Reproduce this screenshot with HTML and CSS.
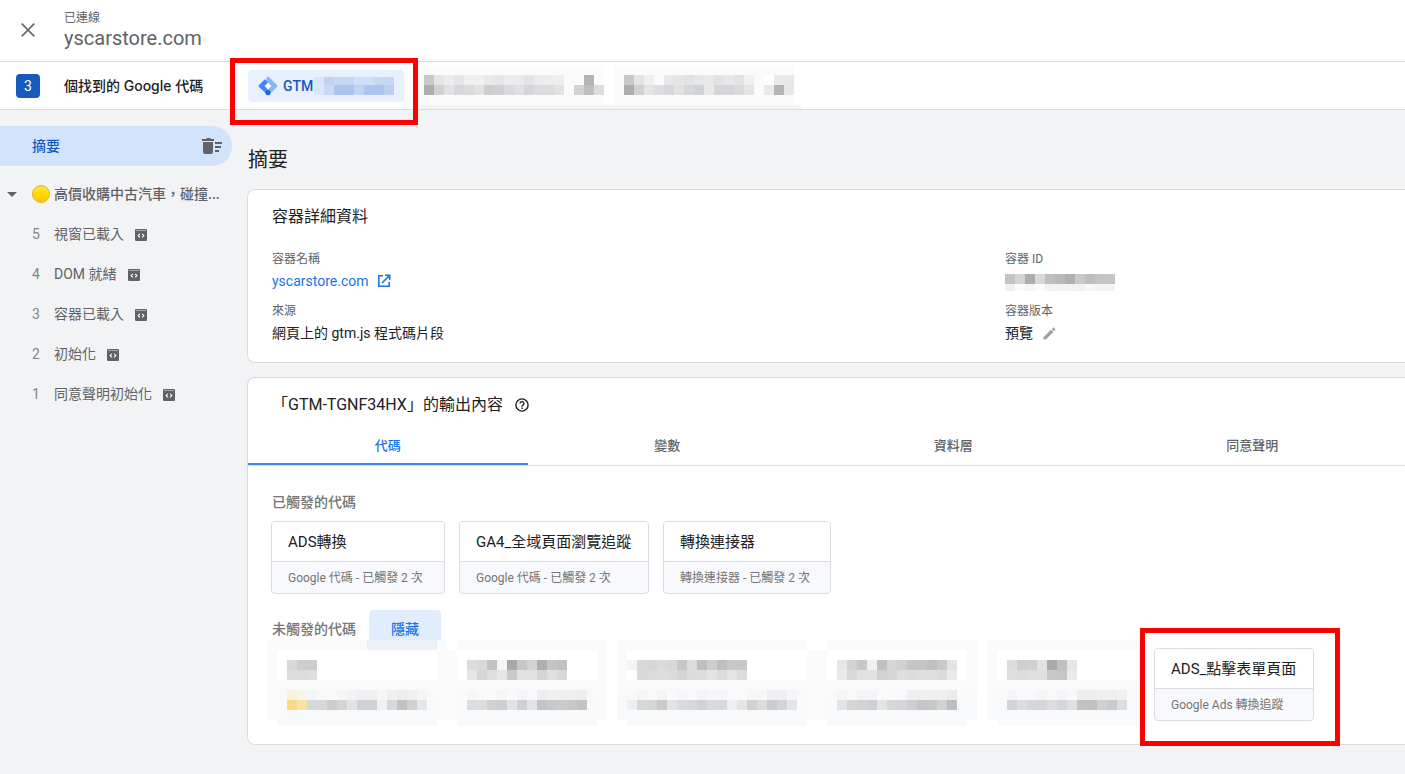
FILE: index.html
```html
<!DOCTYPE html>
<html lang="zh-Hant">
<head>
<meta charset="utf-8">
<title>yscarstore.com</title>
<meta name="viewport" content="width=device-width, initial-scale=1">
<link rel="stylesheet" href="styles.css">
</head>
<body>
<svg class="sprite" aria-hidden="true">
  <symbol id="code" viewBox="0 0 12 12"><rect width="12" height="12" rx="1" fill="#5f6368"/><path d="M1 1.500h10" stroke="#a5a8ac" stroke-width="1"/><path d="M4.900 4.800 3.100 6.600l1.800 1.800M7.100 4.800l1.800 1.800-1.800 1.800" fill="none" stroke="#fff" stroke-width="1.100"/></symbol>
</svg>
<header class="topbar">
  <button class="close" aria-label="關閉"><svg width="14" height="14" viewBox="0 0 14 14"><path d="M.7.7l12.6 12.6M13.3.7.7 13.3" stroke="#6b6f73" stroke-width="1.8"/></svg></button>
  <div>
    <div class="status">已連線</div>
    <div class="domain">yscarstore.com</div>
  </div>
</header>
<div class="tagbar">
  <span class="count">3</span>
  <span class="found">個找到的 Google 代碼</span>
  <div class="chip-wrap">
    <button class="chip">
      <svg width="20" height="20" viewBox="0 0 20 20"><path d="M9.100 1a1.300 1.300 0 0 1 1.800 0l8.100 8.100a1.300 1.300 0 0 1 0 1.800L12 18 6 10z" fill="#8ab4f8"/><path d="M6.800 3.300 10 6.600 9 13l3.200 2.200L9.700 19 1 10.900a1.300 1.300 0 0 1 0-1.800z" fill="#4285f4"/><path d="M10 6.600 13.400 10 10 13.400 6.600 10z" fill="#fff"/><circle cx="10" cy="16.700" r="2.500" fill="#1967d2"/></svg>
      <span>GTM</span>
      <svg class="mosaic" width="80" height="18" viewBox="0 2 80 18" data-x="0" data-y="0" data-rows="d9e5f9 bfd2f1 c6d7f3 c6d7f3 d0dff5 cfdff5 c8daf3 c5d7f2|dce7fb c9d9f5 aec5ee aec5ee c1d3f2 b0c5ed aec6ec bbcff0"></svg>
    </button>
    <span class="mark mark-chip"></span>
  </div>
  <svg class="mosaic others" width="387" height="44" data-x="10" data-y="10" data-rows="c8 e4 ec e4e6e9 f0 f0 e9 e6 eb eb e2e5e4 ebeceb ebeeed ee - - b5 - - - c8 e4 edf0ef fbfbfb e8 e6 e1e3e6 e6e8e8 e8 e3 e8 e4 eff2f1 - ff ea e8|ae d2 e0e2e5 d6d8db dadbde e2e4e3 ce cfd0d2 d9dadd dfe0e3 d5d6da dbdce0 dc e3 - d3 bf dd - - ae d2 e4e6e5 dcdee1 d7d8db e1e3e2 d5d7db d1d3d7 e8eae9 d5d6da d5d6da d8dadd e4 - e9 b4 e7"><rect width="190" height="40" fill="#fbfbfb"/><rect x="200" width="180" height="40" fill="#fbfbfb"/><rect y="40" width="387" height="4" fill="#f4f4f4"/></svg>
</div>
<div class="layout">
  <nav class="side">
    <a class="summary" href="#">摘要
      <svg width="20" height="16" viewBox="0 0 20 16" fill="#5f6368"><path d="M0 1h4l1-1h3l1 1h3v2H0zM1 4h10v10a2 2 0 0 1-2 2H3a2 2 0 0 1-2-2zM13 4h7v2h-7zM13 8h6v2h-6zM13 12h4v2h-4z"/></svg>
    </a>
    <button class="group">
      <svg class="caret" width="10" height="6" viewBox="0 0 10 6"><path d="M0 1h10L5 6z" fill="#5f6368"/></svg>
      <svg class="dot" width="18" height="18" viewBox="0 0 18 18"><defs><linearGradient id="sun" x2="0" y2="1"><stop stop-color="#ffe45a"/><stop offset=".4" stop-color="#ffdc08"/><stop offset="1" stop-color="#fbc900"/></linearGradient></defs><circle cx="9" cy="9" r="8.500" fill="url(#sun)" stroke="#e4b22c"/></svg>
      <span class="page">高價收購中古汽車，碰撞...</span>
    </button>
    <a class="event" href="#"><span class="n">5</span>視窗已載入<svg width="12" height="12"><use href="#code"/></svg></a>
    <a class="event" href="#"><span class="n">4</span>DOM 就緒<svg width="12" height="12"><use href="#code"/></svg></a>
    <a class="event" href="#"><span class="n">3</span>容器已載入<svg width="12" height="12"><use href="#code"/></svg></a>
    <a class="event" href="#"><span class="n">2</span>初始化<svg width="12" height="12"><use href="#code"/></svg></a>
    <a class="event" href="#"><span class="n">1</span>同意聲明初始化<svg width="12" height="12"><use href="#code"/></svg></a>
  </nav>
  <main class="main">
    <h1>摘要</h1>
    <section class="panel details">
      <h2>容器詳細資料</h2>
      <dl>
        <div><dt>容器名稱</dt><dd><a href="#">yscarstore.com<svg width="14" height="14" viewBox="0 0 14 14" fill="none" stroke="#1a73e8" stroke-width="1.600"><path d="M6 1.800H1.800v10.400h10.400V8M8 1.300h4.700V6M12.500 1.500 5 9"/></svg></a></dd></div>
        <div><dt>容器 ID</dt><dd><svg class="mosaic" width="112" height="20" data-x="0" data-y="0" data-rows="c3 d3 ad d9 c0 b9 b1 c9 be c4 c5|f0 fa f5 fb f2 f3 f3 f2 f8 f4 f4" viewBox="0 -3 112 20"></svg></dd></div>
        <div><dt>來源</dt><dd>網頁上的 gtm.js 程式碼片段</dd></div>
        <div><dt>容器版本</dt><dd>預覽<svg width="13" height="13" viewBox="0 0 13 13" fill="#a0a0a0"><path d="M.5 10.200 8 2.700l2.300 2.300-7.500 7.500H.5zM8.800 1.900l1-1c.4-.4.900-.4 1.300 0l1 1c.4.400.4.900 0 1.300l-1 1z"/></svg></dd></div>
      </dl>
    </section>
    <section class="panel output">
      <h2>「GTM-TGNF34HX」的輸出內容
        <svg width="14" height="14" viewBox="0 0 14 14" fill="none" stroke="#202124"><circle cx="7" cy="7" r="6.100" stroke-width="1.400"/><path d="M5.100 5.500a1.900 1.900 0 1 1 2.900 1.600C7.300 7.600 7 7.900 7 8.700" stroke-width="1.300"/><path d="M7 9.600v1.400" stroke-width="1.400"/></svg>
      </h2>
      <div class="tabs" role="tablist">
        <button role="tab" aria-selected="true">代碼</button>
        <button role="tab">變數</button>
        <button role="tab">資料層</button>
        <button role="tab">同意聲明</button>
      </div>
      <h3>已觸發的代碼</h3>
      <div class="cards">
        <article class="card ads"><h4>ADS轉換</h4><p>Google 代碼 - 已觸發 2 次</p></article>
        <article class="card ga"><h4>GA4_全域頁面瀏覽追蹤</h4><p>Google 代碼 - 已觸發 2 次</p></article>
        <article class="card linker"><h4>轉換連接器</h4><p>轉換連接器 - 已觸發 2 次</p></article>
      </div>
      <div class="unfired"><h3>未觸發的代碼</h3><button class="hide">隱藏</button></div>
      <div class="hidden-cards">
        <svg class="mosaic" width="180" height="86" data-x="20" data-y="20" data-rows="d8 cd cd|dc dc de||faf2df f8f4e8 f4f5f6 f7f9fb f7f9fb f5f6f8 f1f2f4 eef0f2 eef0f2 f5f6f8 eef0f2 ebedef eef0f2 f4f5f6|fbda85 fae2a2 d6d8dc d6d8da cd d4 e2e3e6 d0d1d2 d0d1d2 eff0f2 d7d8da c1c2c4 d0 e6e7e8"><path fill="#fafafa" d="M0 0h180v80h-10v6H10v-6H0z"/><path fill="#eaf0fa" d="M100 0h70v10h-70z"/><path fill="#f8fbff" d="M170 0h10v10h-10z"/><path fill="#fff" d="M10 10h160v30H10z"/><path fill="#f7f9fb" d="M10 50h160v30H10z"/><path fill="#f8faf9" d="M10 80h160v6H10z"/></svg>
        <svg class="mosaic" width="160" height="86" data-x="20" data-y="20" data-rows="dc d9 c2 f6 a8 c8 d3 af c4 c1|e6 d7 df e6 c9 e2 e1 d5 df d8||f5f6f8 f7f9fb f7f9fb f5f6f8 f8fafc f5f6f8 f7f9fb ebecee edeff0 edeff0 eceef0 ecedef|dcdddf dcdddf d1 cecfd1 e2e3e6 cfd0d2 e3e4e7 c2c3c5 c7c8ca ca c8 c3"><path fill="#fafafa" d="M10 0h150v80h-10v6H10v-6H0V10h10z"/><path fill="#fff" d="M10 10h140v30H10z"/><path fill="#f7f9fb" d="M10 50h140v30H10z"/><path fill="#f8faf9" d="M10 80h140v6H10z"/></svg>
        <svg class="mosaic gap" width="200" height="86" data-x="10" data-y="20" data-rows="f4 d8 d6 db d8 c7 dc bf ce bf c8 c7|- d9 db dd db d5 db dd e4 db e3 dc||f7f9fb f4f5f7 f7f9fb f4f5f7 f8fafc f6f7f9 f7f9fb f4f5f7 f6f7f9 f5f6f8 f8fafc f8fafc f6f7f9 f6f7f9 edeff0 edeff0 f3f5f7|eeeff1 d6d8da d4d6d5 ca e1e3e6 d9dbdf d6d8da d0d2d6 d9dadd d7d9dc edeff2 e5 d1 dc cacccf d2d4d8 e2e4e6"><path fill="#fafafa" d="M0 0h190v10h10v70h-10v6H10v-6H0z"/><path fill="#fff" d="M10 10h180v30H10z"/><path fill="#f7f9fb" d="M0 50h190v30H0z"/><path fill="#f8faf9" d="M10 80h180v6H10z"/></svg>
        <svg class="mosaic" width="160" height="86" data-x="20" data-y="20" data-rows="e6 d2 c8 f1 c0 d5 d1 c6 c6 c0 ca e3|ea d8 e1 e1 d2 d5 df dc df df db e9||f4f5f7 f7f9fb f4f5f7 f4f5f7 f8fafc f7f9fb f7f9fb edeff0 edeff0 edeff0 edeff0 e9ebed|e2e4e6 d6 d2d3d5 cdcfd2 e3e5e3 d5d7da d3d5d9 cecfcd c4c5c8 c7c8ca d0d2d0 bdbec1"><path fill="#fafafa" d="M10 0h150v80h-10v6H10v-6H0V10h10z"/><path fill="#fff" d="M10 10h140v30H10z"/><path fill="#f7f9fb" d="M10 50h150v30H10z"/><path fill="#f8faf9" d="M10 80h140v6H10z"/></svg>
        <svg class="mosaic gap" width="150" height="86" data-x="20" data-y="20" data-rows="dc ce d0 e1 a9 c0 e6|de dd e0 df c7 c5 ea||f4f5f7 f7f9fb f7f9fb f4f5f7 f7f9fb f4f5f7 f7f9fb ecedef ecedef eeefef eeefef f1f1f1|d2d3d6 dcdde0 d5d7d9 d4d6da dd d4d6da dfe0e2 c2 c1 cfd0d3 c9cacd dcdde0"><path fill="#fafafa" d="M0 0h150v86H10v-6H0z"/><path fill="#fff" d="M10 10h140v30H10z"/><path fill="#f7f9fb" d="M0 50h150v30H0z"/></svg>
        <div class="form-wrap">
          <article class="card form"><h4>ADS_點擊表單頁面</h4><p>Google Ads 轉換追蹤</p></article>
          <span class="mark mark-card"></span>
        </div>
      </div>
    </section>
  </main>
</div>
<script src="mosaic.js"></script>
</body>
</html>
```
FILE: styles.css
```css
* { box-sizing: border-box; }
body {
  margin: 0;
  min-height: 100vh;
  background: #f1f3f4;
  color: #202124;
  font: 14px/20px Roboto, "Noto Sans CJK TC", sans-serif;
  overflow-x: hidden;
}
h1, h2, h3, h4, p, dl, dd { margin: 0; font-weight: 400; }
button { border: 0; background: none; padding: 0; font: inherit; color: inherit; cursor: pointer; }
a { color: inherit; text-decoration: none; }
svg { flex: none; display: block; }
.sprite { position: absolute; width: 0; height: 0; }
.mosaic { shape-rendering: crispEdges; }

.topbar {
  display: flex;
  align-items: flex-start;
  gap: 16px;
  height: 62px;
  padding: 8px 8px 0;
  background: #fff;
  border-bottom: 1px solid #dadce0;
  color: #5f6368;
}
.close { display: grid; place-items: center; width: 40px; height: 44px; }
.status { font-size: 12px; line-height: 20px; }
.domain { font-size: 20px; line-height: 20px; }

.tagbar {
  display: flex;
  align-items: center;
  height: 48px;
  padding-left: 16px;
  background: #fff;
  border-bottom: 1px solid #dadce0;
}
.count {
  width: 24px;
  border-radius: 4px;
  background: #185abc;
  color: #fff;
  line-height: 24px;
  text-align: center;
}
.found { width: 184px; margin-left: 24px; font-family: Inter, "Noto Sans CJK TC", sans-serif; font-weight: 500; white-space: nowrap; }
.chip-wrap, .form-wrap { position: relative; }
.chip {
  display: flex;
  align-items: center;
  width: 156px;
  height: 32px;
  padding-left: 10px;
  border-radius: 4px;
  background: #e8f0fe;
  color: #185abc;
  font-weight: 500;
}
.chip span { width: 36px; padding-left: 5px; text-align: left; }
.others { margin: 3px 0 0 10px; }
.mark { position: absolute; border: 5px solid #f00; pointer-events: none; }
.mark-chip { inset: -12px -14px -23px -18px; }
.mark-card { inset: -20px -26px -25px -14px; }

.layout { display: flex; }
.side { flex: none; width: 232px; padding-top: 16px; color: #5f6368; }
.summary {
  display: flex;
  align-items: center;
  justify-content: space-between;
  height: 40px;
  margin-bottom: 8px;
  padding: 0 10px 0 32px;
  border-radius: 0 20px 20px 0;
  background: #d2e3fc;
  color: #185abc;
  font-weight: 500;
}
.group { display: flex; align-items: center; width: 100%; height: 40px; padding: 0 7px; font-weight: 500; }
.dot { margin: 0 4px 0 15px; }
.page { white-space: nowrap; }
.event { display: flex; align-items: center; height: 40px; padding-left: 32px; }
.event .n { width: 22px; color: #80868b; }
.event svg { margin: 2px 0 0 11px; }

.main { flex: 1; min-width: 0; padding: 38px 0 24px 15px; }
h1 { margin-bottom: 17px; padding-left: 1px; font-size: 20px; line-height: 24px; }
.panel {
  margin-bottom: 14px;
  background: #fff;
  border: 1px solid #dadce0;
  border-right: 0;
  border-radius: 8px 0 0 8px;
}
.panel h2 { display: flex; align-items: center; gap: 12px; padding: 0 24px; font-size: 16px; line-height: 24px; }
.details { padding: 15px 0 9px; }
dl { display: grid; grid-template-columns: 11fr 6fr; padding: 20px 0 0 24px; }
dt { color: #5f6368; font-size: 12px; line-height: 20px; }
dd { display: flex; align-items: center; gap: 10px; height: 32px; padding-bottom: 8px; }
dd a { display: flex; align-items: center; gap: 8px; color: #1a73e8; }

.output { padding: 15px 0 18px; }
.tabs { display: flex; margin-top: 8px; border-bottom: 1px solid #dadce0; color: #5f6368; font-size: 13px; font-weight: 500; }
.tabs button { flex: 1 1 auto; height: 40px; padding-top: 3px; border-bottom: 2px solid transparent; }
.tabs [aria-selected] { border-color: #4285f4; color: #1a73e8; }
h3 { color: #757575; font-size: 14px; font-weight: 500; }
.output > h3 { padding: 26px 24px 9px; }
.cards { display: flex; gap: 14px; padding-left: 23px; }
.card { border: 1px solid #dadce0; border-radius: 4px; background: #f8f9fc; white-space: nowrap; overflow: hidden; }
.card h4 { padding: 1px 16px 0; background: #fff; border-bottom: 1px solid #dadce0; font-size: 15px; line-height: 38px; }
.card p { padding: 0 16px; color: #757575; font-size: 12px; line-height: 32px; }
.ads { width: 174px; }
.ga { width: 190px; }
.linker { width: 168px; }
.form { width: 160px; }
.cards, .form { height: 73px; }
.unfired { display: flex; align-items: flex-start; gap: 13px; height: 30px; margin-top: 16px; padding-left: 24px; }
.unfired h3 { line-height: 38px; }
.hide { width: 72px; height: 30px; border-radius: 4px 4px 0 0; background: #e1edfc; color: #1a73e8; font-weight: 500; line-height: 38px; }
.hidden-cards { display: flex; align-items: flex-start; padding-left: 19px; }
.gap { margin-left: 10px; }
.form-wrap { margin: 8px 0 0 17px; }
```
FILE: mosaic.js
```js
// Fills each .mosaic with 10px cells; "-" leaves a cell empty, two digits mean a grey.
document.querySelectorAll('.mosaic').forEach(function (svg) {
  svg.dataset.rows.split('|').forEach(function (row, r) {
    if (!row) return;
    row.split(' ').forEach(function (c, i) {
      if (c === '-') return;
      var cell = document.createElementNS('http://www.w3.org/2000/svg', 'rect');
      cell.setAttribute('x', +svg.dataset.x + i * 10);
      cell.setAttribute('y', +svg.dataset.y + r * 10);
      cell.setAttribute('width', 10);
      cell.setAttribute('height', 10);
      cell.setAttribute('fill', '#' + (c.length === 2 ? c + c + c : c));
      svg.appendChild(cell);
    });
  });
});
```
